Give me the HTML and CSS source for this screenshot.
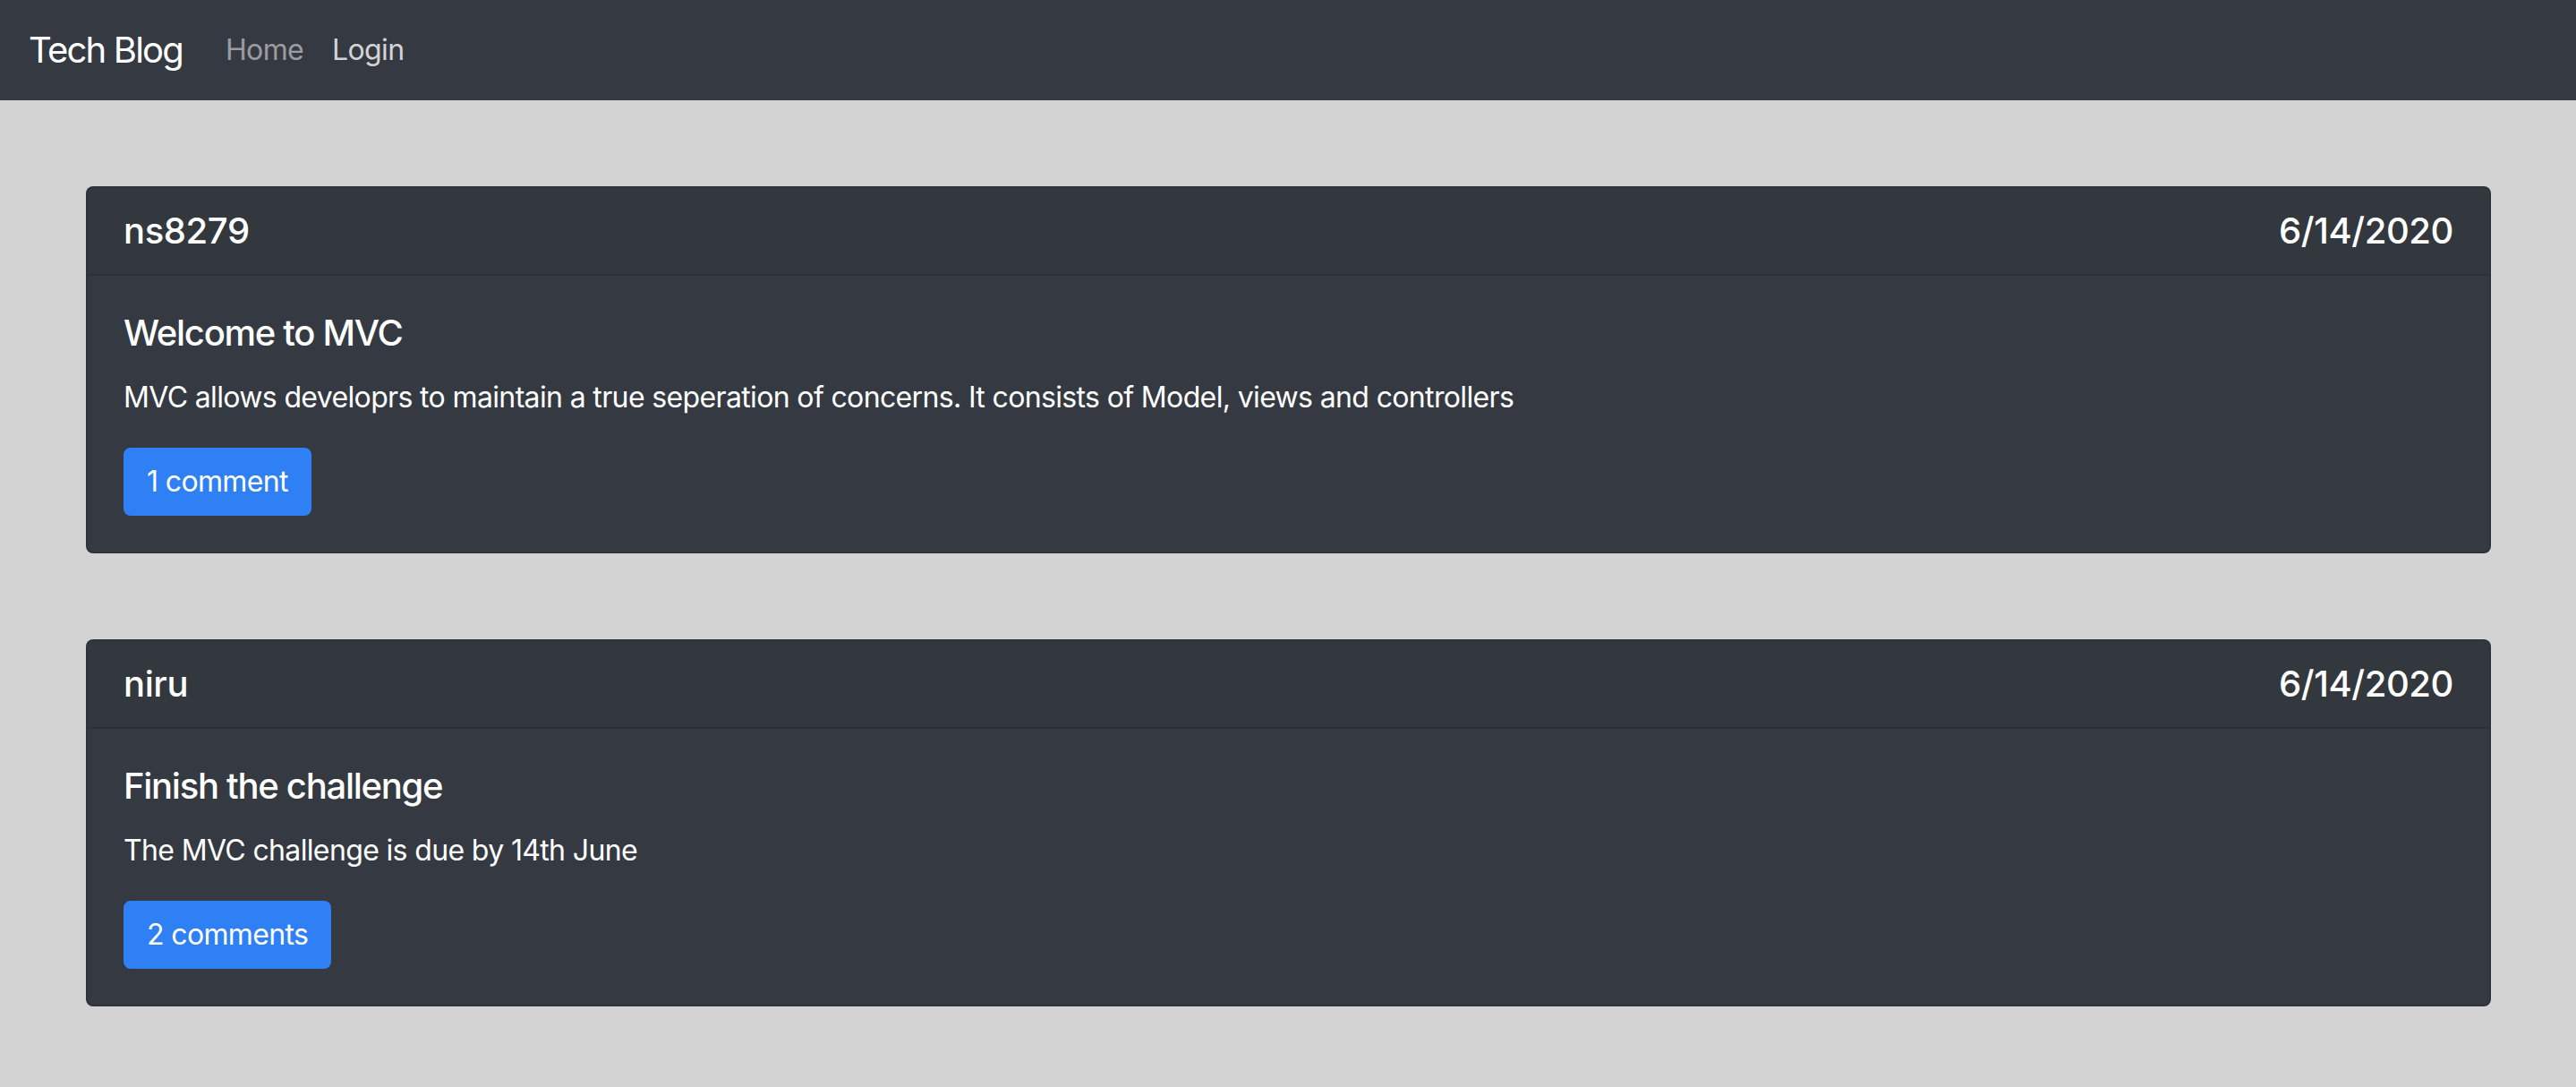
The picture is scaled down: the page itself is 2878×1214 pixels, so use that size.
FILE: index.html
```html
<!DOCTYPE html>
<html lang="en">
<head>
<meta charset="utf-8">
<title>Tech Blog</title>
<link rel="stylesheet" href="styles.css">
</head>
<body>
<nav class="navbar">
  <a class="brand" href="#">Tech Blog</a>
  <ul class="nav">
    <li><a class="nav-link" href="#">Home</a></li>
    <li><a class="nav-link nav-link-hover" href="#">Login</a></li>
  </ul>
</nav>
<main class="posts">
  <article class="card">
    <header class="card-header">
      <h5 class="head-text">ns8279</h5>
      <h5 class="head-text">6/14/2020</h5>
    </header>
    <div class="card-body">
      <h5 class="card-title">Welcome to MVC</h5>
      <p class="card-text">MVC allows developrs to maintain a true seperation of concerns. It consists of Model, views and controllers</p>
      <a class="btn" href="#">1 comment</a>
    </div>
  </article>
  <article class="card">
    <header class="card-header">
      <h5 class="head-text">niru</h5>
      <h5 class="head-text">6/14/2020</h5>
    </header>
    <div class="card-body">
      <h5 class="card-title">Finish the challenge</h5>
      <p class="card-text">The MVC challenge is due by 14th June</p>
      <a class="btn" href="#">2 comments</a>
    </div>
  </article>
</main>
</body>
</html>
```
FILE: styles.css
```css
* { box-sizing: border-box; }
html, body { margin: 0; padding: 0; }
body {
  background: #d3d3d3;
  font-family: Inter, "Noto Sans", "Liberation Sans", sans-serif;
  font-size: 32px;
  line-height: 1.5;
  color: #fff;
  letter-spacing: -0.02em;
}
a { text-decoration: none; }

.navbar {
  display: flex;
  align-items: center;
  background: #353a42;
  padding: 16px 32px;
  height: 112px;
}
.brand {
  color: #fff;
  font-size: 40px;
  line-height: 60px;
  padding: 10px 0;
  margin-right: 32px;
  white-space: nowrap;
  letter-spacing: -0.045em;
}
.nav {
  display: flex;
  list-style: none;
  margin: 0;
  padding: 0;
}
.nav-link {
  display: block;
  padding: 16px 16px;
  color: rgba(255,255,255,.5);
  font-size: 32px;
  line-height: 48px;
}
.nav-link-hover { color: rgba(255,255,255,.8); }

.posts {
  display: flex;
  flex-direction: column;
  gap: 96px;
  padding: 96px 95px 96px 96px;
}
.card {
  background: #353a42;
  border: 2px solid rgba(0,0,0,.125);
  border-radius: 8px;
  overflow: hidden;
}
.card-header {
  display: flex;
  justify-content: space-between;
  padding: 24px 40px;
  background: rgba(0,0,0,.03);
  border-bottom: 2px solid rgba(0,0,0,.125);
}
.head-text, .card-title {
  margin: 0;
  font-size: 40px;
  line-height: 48px;
  font-weight: 500;
}
.head-text { letter-spacing: -0.01em; }
.card-body { padding: 40px; }
.card-title {
  margin-bottom: 24px;
  letter-spacing: -0.032em;
}
.card-text {
  margin: 0 0 32px;
  font-size: 32px;
  line-height: 48px;
}
.btn {
  display: inline-block;
  background: #2f80f5;
  border: 2px solid #2f80f5;
  border-radius: 8px;
  color: #fff;
  padding: 12px 24px;
  font-size: 32px;
  line-height: 48px;
}
```
